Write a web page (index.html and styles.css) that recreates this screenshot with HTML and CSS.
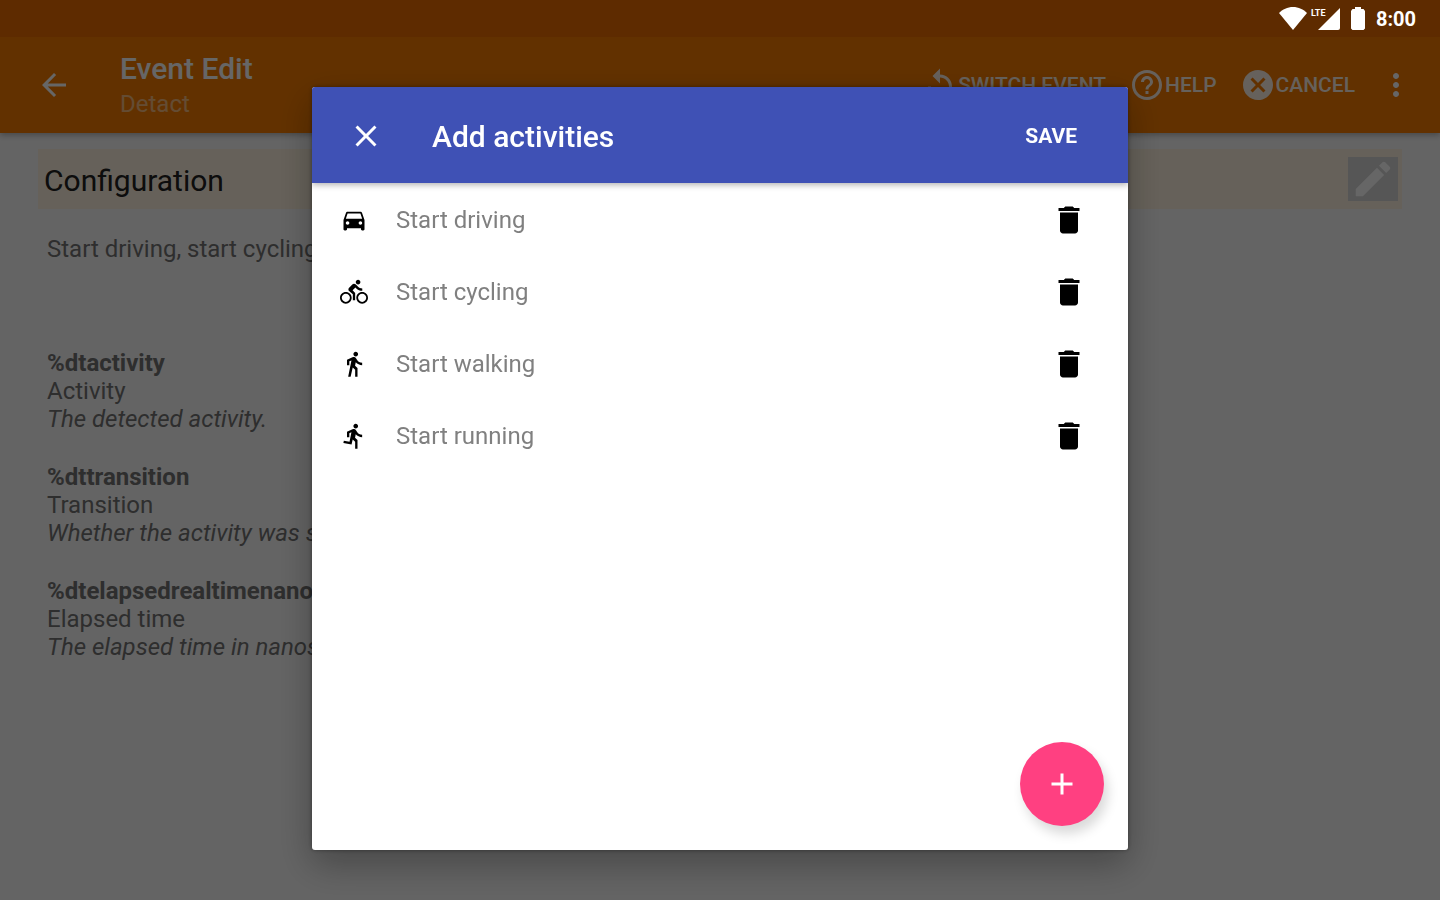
FILE: index.html
```html
<!DOCTYPE html>
<html lang="en">
<head>
    <meta charset="UTF-8">
    <meta name="viewport" content="width=device-width, initial-scale=1.0">
    <title>Event Edit</title>
    <link rel="stylesheet" href="styles.css">
</head>
<body>
    <div class="status-bar">
        <svg class="wifi" viewBox="0 0 28 23"><path d="M14 23L0 6C3.500 2.500 8.500 0 14 0s10.500 2.500 14 6z"/></svg>
        <div class="signal">
            <span class="lte">LTE</span>
            <svg viewBox="0 0 22 22"><path d="M0 22L22 0v20a2 2 0 0 1-2 2z"/></svg>
        </div>
        <svg class="battery" viewBox="0 0 14 23"><path d="M4 0h6v2h2.500L14 4v17.500L12.500 23h-11L0 21.500V4l1.500-2H4z"/></svg>
        <time class="clock">8:00</time>
    </div>

    <header class="app-bar">
        <button class="icon-button" aria-label="Back">
            <svg viewBox="0 0 24 24"><path d="M20 11H7.830l5.590-5.590L12 4l-8 8 8 8 1.410-1.410L7.830 13H20v-2z"/></svg>
        </button>
        <div class="titles">
            <h1>Event Edit</h1>
            <p>Detact</p>
        </div>
        <nav class="actions">
            <button class="action">
                <svg viewBox="0 0 24 24"><path d="M12 5V1L7 6l5 5V7c3.310 0 6 2.690 6 6s-2.690 6-6 6-6-2.690-6-6H4c0 4.420 3.580 8 8 8s8-3.580 8-8-3.580-8-8-8z"/></svg>
                <span>SWITCH EVENT</span>
            </button>
            <button class="action">
                <svg viewBox="0 0 24 24"><path d="M11 18h2v-2h-2v2zm1-16C6.480 2 2 6.480 2 12s4.480 10 10 10 10-4.480 10-10S17.520 2 12 2zm0 18c-4.410 0-8-3.590-8-8s3.590-8 8-8 8 3.590 8 8-3.590 8-8 8zm0-14c-2.210 0-4 1.790-4 4h2c0-1.100.900-2 2-2s2 .900 2 2c0 2-3 1.750-3 5h2c0-2.250 3-2.500 3-5 0-2.210-1.790-4-4-4z"/></svg>
                <span>HELP</span>
            </button>
            <button class="action">
                <svg viewBox="0 0 24 24"><path d="M12 2C6.470 2 2 6.470 2 12s4.470 10 10 10 10-4.470 10-10S17.530 2 12 2zm5 13.590L15.590 17 12 13.410 8.410 17 7 15.590 10.590 12 7 8.410 8.410 7 12 10.590 15.590 7 17 8.410 13.410 12 17 15.590z"/></svg>
                <span>CANCEL</span>
            </button>
            <button class="icon-button" aria-label="More options">
                <svg viewBox="0 0 24 24"><path d="M12 8c1.100 0 2-.900 2-2s-.900-2-2-2-2 .900-2 2 .900 2 2 2zm0 2c-1.100 0-2 .900-2 2s.900 2 2 2 2-.900 2-2-.900-2-2-2zm0 6c-1.100 0-2 .900-2 2s.900 2 2 2 2-.900 2-2-.900-2-2-2z"/></svg>
            </button>
        </nav>
    </header>

    <main class="page">
        <div class="section-head">
            <h2>Configuration</h2>
            <button class="edit" aria-label="Edit configuration">
                <svg viewBox="0 0 24 24"><path d="M3 17.250V21h3.750L17.810 9.940l-3.750-3.750L3 17.250zM20.710 7.040c.390-.390.390-1.020 0-1.410l-2.340-2.340c-.390-.390-1.020-.390-1.410 0l-1.830 1.830 3.750 3.750 1.830-1.830z"/></svg>
            </button>
        </div>
        <p class="summary">Start driving, start cycling</p>
        <dl class="variables">
            <div class="variable">
                <dt>%dtactivity</dt>
                <dd>Activity</dd>
                <dd><em>The detected activity.</em></dd>
            </div>
            <div class="variable">
                <dt>%dttransition</dt>
                <dd>Transition</dd>
                <dd><em>Whether the activity was started</em></dd>
            </div>
            <div class="variable">
                <dt>%dtelapsedrealtimenanos</dt>
                <dd>Elapsed time</dd>
                <dd><em>The elapsed time in nanoseconds</em></dd>
            </div>
        </dl>
    </main>

    <div class="scrim">
        <section class="dialog" role="dialog" aria-labelledby="dialogTitle">
            <header class="dialog-bar">
                <button class="icon-button" aria-label="Close">
                    <svg viewBox="0 0 24 24"><path d="M19 6.410L17.590 5 12 10.590 6.410 5 5 6.410 10.590 12 5 17.590 6.410 19 12 13.410 17.590 19 19 17.590 13.410 12z"/></svg>
                </button>
                <h2 id="dialogTitle">Add activities</h2>
                <button class="save">SAVE</button>
            </header>
            <ul class="activities">
                <li>
                    <svg viewBox="0 0 24 24"><path d="M18.920 6.010C18.720 5.420 18.160 5 17.500 5h-11c-.660 0-1.210.420-1.420 1.010L3 12v8c0 .550.450 1 1 1h1c.550 0 1-.450 1-1v-1h12v1c0 .550.450 1 1 1h1c.550 0 1-.450 1-1v-8l-2.080-5.990zM6.500 16c-.830 0-1.500-.670-1.500-1.500S5.670 13 6.500 13s1.500.670 1.500 1.500S7.330 16 6.500 16zm11 0c-.830 0-1.500-.670-1.500-1.500s.670-1.500 1.500-1.500 1.500.670 1.500 1.500-.670 1.500-1.500 1.500zM5 11l1.500-4.500h11L19 11H5z"/></svg>
                    <span>Start driving</span>
                    <button class="icon-button" aria-label="Delete start driving">
                        <svg viewBox="0 0 24 24"><path d="M6 19c0 1.100.900 2 2 2h8c1.100 0 2-.900 2-2V7H6v12zM19 4h-3.500l-1-1h-5l-1 1H5v2h14V4z"/></svg>
                    </button>
                </li>
                <li>
                    <svg viewBox="0 0 24 24"><path d="M15.500 5.500c1.100 0 2-.900 2-2s-.900-2-2-2-2 .900-2 2 .900 2 2 2zM5 12c-2.800 0-5 2.200-5 5s2.200 5 5 5 5-2.200 5-5-2.200-5-5-5zm0 8.500c-1.900 0-3.500-1.600-3.500-3.500s1.600-3.500 3.500-3.500 3.500 1.600 3.500 3.500-1.600 3.500-3.500 3.500zm5.800-10l2.400-2.400.8.8c1.300 1.300 3 2.100 5.100 2.100V9c-1.500 0-2.700-.6-3.600-1.500l-1.900-1.900c-.5-.4-1-.6-1.600-.6s-1.100.2-1.400.6L7.800 8.400c-.4.400-.6.900-.6 1.400 0 .6.200 1.100.6 1.400L11 14v5h2v-6.200l-2.200-2.300zM19 12c-2.800 0-5 2.200-5 5s2.200 5 5 5 5-2.200 5-5-2.200-5-5-5zm0 8.500c-1.900 0-3.500-1.600-3.500-3.500s1.600-3.500 3.500-3.500 3.500 1.600 3.500 3.500-1.600 3.500-3.500 3.500z"/></svg>
                    <span>Start cycling</span>
                    <button class="icon-button" aria-label="Delete start cycling">
                        <svg viewBox="0 0 24 24"><path d="M6 19c0 1.100.900 2 2 2h8c1.100 0 2-.900 2-2V7H6v12zM19 4h-3.500l-1-1h-5l-1 1H5v2h14V4z"/></svg>
                    </button>
                </li>
                <li>
                    <svg viewBox="0 0 24 24"><path d="M13.500 5.500c1.100 0 2-.900 2-2s-.900-2-2-2-2 .900-2 2 .900 2 2 2zM9.800 8.900L7 23h2.100l1.800-8 2.100 2v6h2v-7.500l-2.100-2 .6-3C14.800 12 16.800 13 19 13v-2c-1.900 0-3.500-1-4.300-2.400l-1-1.600c-.4-.6-1-1-1.700-1-.3 0-.5.1-.8.1L6 8.300V13h2V9.600l1.800-.7"/></svg>
                    <span>Start walking</span>
                    <button class="icon-button" aria-label="Delete start walking">
                        <svg viewBox="0 0 24 24"><path d="M6 19c0 1.100.900 2 2 2h8c1.100 0 2-.900 2-2V7H6v12zM19 4h-3.500l-1-1h-5l-1 1H5v2h14V4z"/></svg>
                    </button>
                </li>
                <li>
                    <svg viewBox="0 0 24 24"><path d="M13.490 5.480c1.100 0 2-.900 2-2s-.900-2-2-2-2 .900-2 2 .900 2 2 2zm-3.600 13.900l1-4.400 2.100 2v6h2v-7.500l-2.100-2 .6-3c1.300 1.500 3.300 2.500 5.500 2.500v-2c-1.900 0-3.500-1-4.300-2.400l-1-1.600c-.4-.6-1-1-1.700-1-.3 0-.5.1-.8.1l-5.200 2.200v4.700h2v-3.400l1.800-.7-1.600 8.100-4.900-1-.4 2 7 1.400z"/></svg>
                    <span>Start running</span>
                    <button class="icon-button" aria-label="Delete start running">
                        <svg viewBox="0 0 24 24"><path d="M6 19c0 1.100.900 2 2 2h8c1.100 0 2-.900 2-2V7H6v12zM19 4h-3.500l-1-1h-5l-1 1H5v2h14V4z"/></svg>
                    </button>
                </li>
            </ul>
            <button class="fab" aria-label="Add activity">
                <svg viewBox="0 0 24 24"><path d="M19 13h-6v6h-2v-6H5v-2h6V5h2v6h6v2z"/></svg>
            </button>
        </section>
    </div>
</body>
</html>
```

FILE: styles.css
```css
* {
    box-sizing: border-box;
}
body {
    margin: 0;
    height: 100vh;
    overflow: hidden;
    display: flex;
    flex-direction: column;
    font-family: Roboto, "Liberation Sans", sans-serif;
    font-size: 24px;
    line-height: 28px;
    color: #737373;
    background: #fafafa;
}
h1, h2, p, ul, dl, dd {
    margin: 0;
    padding: 0;
}
button {
    padding: 0;
    border: 0;
    background: none;
    color: inherit;
    font: inherit;
    cursor: pointer;
}
svg {
    display: block;
    flex: none;
    fill: currentColor;
}
.icon-button svg,
.action svg,
.fab svg {
    width: 36px;
    height: 36px;
}

/* Status bar, its icons stay bright above the dimmed page */
.status-bar {
    height: 37px;
    flex: none;
    display: flex;
    align-items: center;
    justify-content: flex-end;
    padding-right: 24px;
    color: white;
    background: #5e2b00;
    position: relative;
    z-index: 2;
}
.wifi {
    width: 28px;
    height: 23px;
}
.signal {
    position: relative;
    margin: 0 11px;
}
.signal svg {
    width: 22px;
    height: 22px;
}
.lte {
    position: absolute;
    top: 0;
    left: -7px;
    font-size: 9px;
    font-weight: 700;
    line-height: 10px;
}
.battery {
    width: 14px;
    height: 23px;
    margin-right: 11px;
}
.clock {
    font-size: 20px;
    font-weight: 700;
}

/* App bar */
.app-bar {
    height: 96px;
    flex: none;
    display: flex;
    align-items: center;
    padding: 0 26px 0 36px;
    color: white;
    background: #f57c00;
    box-shadow: 0 2px 6px rgba(0, 0, 0, 0.3);
}
.titles {
    margin-left: 48px;
    padding-top: 2px;
}
.titles h1 {
    font-size: 30px;
    font-weight: 500;
    line-height: 36px;
}
.titles p {
    opacity: 0.5;
    line-height: 34px;
}
.actions {
    margin-left: auto;
    display: flex;
    gap: 23px;
}
.action {
    display: flex;
    align-items: center;
    font-size: 21px;
    font-weight: 500;
    opacity: 0.9;
}

/* Event configuration */
.page {
    padding: 16px 38px;
}
.section-head {
    display: flex;
    align-items: center;
    justify-content: space-between;
    height: 60px;
    padding: 0 4px 0 6px;
    background: #fff3e0;
}
.section-head h2 {
    padding-top: 4px;
    font-size: 30px;
    font-weight: 400;
    color: #212121;
}
.edit {
    display: flex;
    align-items: center;
    justify-content: center;
    width: 50px;
    height: 44px;
    color: white;
    background: #d6d6d6;
}
.edit svg {
    width: 46px;
    height: 46px;
}
.summary {
    margin: 26px 9px 86px;
}
.variables {
    display: grid;
    gap: 30px;
    margin: 0 9px;
}
.variable dt {
    font-weight: 700;
}

/* Dialog */
.scrim {
    position: fixed;
    inset: 37px 0 0;
    display: flex;
    justify-content: center;
    padding: 50px 24px;
    background: rgba(0, 0, 0, 0.6);
}
.dialog {
    position: relative;
    width: 100%;
    max-width: 816px;
    overflow: hidden;
    background: white;
    border-radius: 3px;
    box-shadow: 0 14px 36px rgba(0, 0, 0, 0.3), 0 0 4px rgba(0, 0, 0, 0.4);
}
.dialog-bar {
    display: flex;
    align-items: center;
    height: 96px;
    padding: 2px 51px 0 36px;
    color: white;
    background: #3f51b5;
    box-shadow: 0 2px 6px rgba(0, 0, 0, 0.3);
}
.dialog-bar h2 {
    margin-left: 48px;
    padding-top: 2px;
    font-size: 30px;
    font-weight: 500;
}
.save {
    margin-left: auto;
    font-size: 21px;
    font-weight: 700;
}
.activities {
    padding-top: 1px;
    list-style: none;
}
.activities li {
    display: flex;
    align-items: center;
    gap: 28px;
    height: 72px;
    padding: 0 41px 0 28px;
    color: #808080;
}
.activities svg {
    color: black;
}
.activities li > svg {
    width: 28px;
    height: 28px;
}
.activities .icon-button {
    margin-left: auto;
}
.fab {
    position: absolute;
    right: 24px;
    bottom: 24px;
    display: flex;
    align-items: center;
    justify-content: center;
    width: 84px;
    height: 84px;
    color: white;
    background: #ff4081;
    border-radius: 50%;
    box-shadow: 4px 8px 12px rgba(0, 0, 0, 0.15);
}
```
